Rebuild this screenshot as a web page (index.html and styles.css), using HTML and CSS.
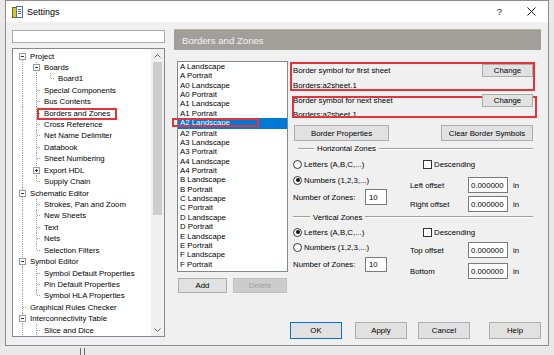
FILE: index.html
```html
<!DOCTYPE html>
<html lang="en">
<head>
    <meta charset="UTF-8">
    <title>Settings</title>
    <link rel="stylesheet" href="styles.css">
</head>
<body>
    <div class="window">
        <div class="titlebar">
            <svg class="app-icon" width="11" height="12" viewBox="0 0 11 12">
                <rect x="0.5" y="1.5" width="4" height="10" fill="#dcc52a" stroke="#6d6a22"/>
                <rect x="4.5" y="0.5" width="6" height="11" fill="#fff" stroke="#4a6fb5"/>
                <path d="M6 3.5h3M6 5.5h3M6 7.5h3" stroke="#4a6fb5"/>
            </svg>
            <span class="title">Settings</span>
            <span class="help">?</span>
            <svg class="close" width="9" height="9" viewBox="0 0 9 9">
                <path d="M0.5 0.5l8 8M8.5 0.5l-8 8" stroke="#222" stroke-width="1"/>
            </svg>
        </div>

        <div class="body">
            <div class="nav">
                <div class="search"></div>
                <div class="tree">
                    <div class="tree-body">
                        <div class="row"><i class="c minus first"></i><span>Project</span></div>
                        <div class="row"><i class="c ln"></i><i class="c minus"></i><span>Boards</span></div>
                        <div class="row"><i class="c ln"></i><i class="c ln"></i><i class="c end"></i><span>Board1</span></div>
                        <div class="row"><i class="c ln"></i><i class="c tee"></i><span>Special Components</span></div>
                        <div class="row"><i class="c ln"></i><i class="c tee"></i><span>Bus Contents</span></div>
                        <div class="row"><i class="c ln"></i><i class="c tee"></i><span>Borders and Zones</span></div>
                        <div class="row"><i class="c ln"></i><i class="c tee"></i><span>Cross Reference</span></div>
                        <div class="row"><i class="c ln"></i><i class="c tee"></i><span>Net Name Delimiter</span></div>
                        <div class="row"><i class="c ln"></i><i class="c tee"></i><span>Databook</span></div>
                        <div class="row"><i class="c ln"></i><i class="c tee"></i><span>Sheet Numbering</span></div>
                        <div class="row"><i class="c ln"></i><i class="c plus"></i><span>Export HDL</span></div>
                        <div class="row"><i class="c ln"></i><i class="c end"></i><span>Supply Chain</span></div>
                        <div class="row"><i class="c minus"></i><span>Schematic Editor</span></div>
                        <div class="row"><i class="c ln"></i><i class="c tee"></i><span>Strokes, Pan and Zoom</span></div>
                        <div class="row"><i class="c ln"></i><i class="c tee"></i><span>New Sheets</span></div>
                        <div class="row"><i class="c ln"></i><i class="c tee"></i><span>Text</span></div>
                        <div class="row"><i class="c ln"></i><i class="c tee"></i><span>Nets</span></div>
                        <div class="row"><i class="c ln"></i><i class="c end"></i><span>Selection Filters</span></div>
                        <div class="row"><i class="c minus"></i><span>Symbol Editor</span></div>
                        <div class="row"><i class="c ln"></i><i class="c tee"></i><span>Symbol Default Properties</span></div>
                        <div class="row"><i class="c ln"></i><i class="c tee"></i><span>Pin Default Properties</span></div>
                        <div class="row"><i class="c ln"></i><i class="c end"></i><span>Symbol HLA Properties</span></div>
                        <div class="row"><i class="c tee"></i><span>Graphical Rules Checker</span></div>
                        <div class="row"><i class="c minus"></i><span>Interconnectivity Table</span></div>
                        <div class="row"><i class="c ln"></i><i class="c tee"></i><span>Slice and Dice</span></div>
                        <div class="mark tree-mark"></div>
                    </div>
                    <div class="vscroll">
                        <div class="arrow">
                            <svg width="7" height="4" viewBox="0 0 7 4"><path d="M0.5 3.5l3-3 3 3" fill="none" stroke="#606060"/></svg>
                        </div>
                        <div class="track"><div class="thumb"></div></div>
                        <div class="arrow">
                            <svg width="7" height="4" viewBox="0 0 7 4"><path d="M0.5 0.5l3 3 3-3" fill="none" stroke="#606060"/></svg>
                        </div>
                    </div>
                </div>
            </div>

            <div class="main">
                <div class="page-header">Borders and Zones</div>
                <div class="page">
                    <div class="sizes">
                        <div class="size-list">
                            <div>A Landscape</div>
                            <div>A Portrait</div>
                            <div>A0 Landscape</div>
                            <div>A0 Portrait</div>
                            <div>A1 Landscape</div>
                            <div>A1 Portrait</div>
                            <div class="sel">A2 Landscape</div>
                            <div>A2 Portrait</div>
                            <div>A3 Landscape</div>
                            <div>A3 Portrait</div>
                            <div>A4 Landscape</div>
                            <div>A4 Portrait</div>
                            <div>B Landscape</div>
                            <div>B Portrait</div>
                            <div>C Landscape</div>
                            <div>C Portrait</div>
                            <div>D Landscape</div>
                            <div>D Portrait</div>
                            <div>E Landscape</div>
                            <div>E Portrait</div>
                            <div>F Landscape</div>
                            <div>F Portrait</div>
                            <div class="mark list-mark"></div>
                        </div>
                        <div class="list-buttons">
                            <button class="btn add">Add</button>
                            <button class="btn delete" disabled>Delete</button>
                        </div>
                    </div>

                    <div class="props">
                        <div class="sym-row">
                            <span>Border symbol for first sheet</span>
                            <button class="btn change">Change</button>
                        </div>
                        <div class="sym-val first-val">Borders:a2sheet.1</div>
                        <div class="sym-row">
                            <span>Border symbol for next sheet</span>
                            <button class="btn change">Change</button>
                        </div>
                        <div class="sym-val next-val">Borders:a2sheet.1</div>

                        <div class="prop-buttons">
                            <button class="btn border-props">Border Properties</button>
                            <button class="btn clear-symbols">Clear Border Symbols</button>
                        </div>

                        <div class="zone-title h-title">
                            <span class="rule lead"></span><span>Horizontal Zones</span><span class="rule"></span>
                        </div>
                        <div class="zones">
                            <div class="zone-left">
                                <div class="radio"><span class="dot"></span>Letters (A,B,C,...)</div>
                                <div class="radio"><span class="dot on"></span>Numbers (1,2,3,...)</div>
                                <div class="count h-count"><span class="count-label">Number of Zones:</span><input class="edit small" value="10"></div>
                            </div>
                            <div class="zone-right">
                                <div class="check"><span class="box"></span>Descending</div>
                                <div class="field left-off"><span class="field-label">Left offset</span><input class="edit" value="0.000000"><span class="unit">in</span></div>
                                <div class="field right-off"><span class="field-label">Right offset</span><input class="edit" value="0.000000"><span class="unit">in</span></div>
                            </div>
                        </div>

                        <div class="zone-title v-title">
                            <span class="rule lead"></span><span>Vertical Zones</span><span class="rule"></span>
                        </div>
                        <div class="zones v-zones">
                            <div class="zone-left">
                                <div class="radio"><span class="dot on"></span>Letters (A,B,C,...)</div>
                                <div class="radio short"><span class="dot"></span>Numbers (1,2,3,...)</div>
                                <div class="count v-count"><span class="count-label">Number of Zones:</span><input class="edit small" value="10"></div>
                            </div>
                            <div class="zone-right">
                                <div class="check"><span class="box"></span>Descending</div>
                                <div class="field top-off"><span class="field-label">Top offset</span><input class="edit" value="0.000000"><span class="unit">in</span></div>
                                <div class="field bottom-off"><span class="field-label">Bottom</span><input class="edit" value="0.000000"><span class="unit">in</span></div>
                            </div>
                        </div>

                        <div class="mark sym-mark-1"></div>
                        <div class="mark sym-mark-2"></div>
                    </div>
                </div>

                <div class="footer">
                    <button class="btn dlg ok">OK</button>
                    <button class="btn dlg apply">Apply</button>
                    <button class="btn dlg cancel">Cancel</button>
                    <button class="btn dlg help-btn">Help</button>
                </div>
            </div>
        </div>
    </div>
    <div class="dock"></div>
</body>
</html>
```

FILE: styles.css
```css
body {
    margin: 0;
    width: 554px;
    height: 355px;
    overflow: hidden;
    background: #e9e9e9;
    font-family: "Liberation Sans", Arial, sans-serif;
    font-size: 7.8px;
    color: #000;
}
.window {
    margin-left: 5px;
    width: 542px;
    height: 344px;
    border: 1px solid #8c8c8c;
    background: #f0f0f0;
    display: flex;
    flex-direction: column;
}
.titlebar {
    height: 21px;
    flex: none;
    background: #fff;
    display: flex;
    align-items: center;
    padding-left: 6px;
}
.title {
    margin-left: 4px;
    font-size: 9px;
}
.help {
    margin-left: auto;
    font-size: 9.5px;
    color: #222;
}
.close {
    margin: 0 12px 0 25px;
}
.body {
    display: flex;
    gap: 9px;
    padding: 8px 7px 0 6px;
}

/* navigation tree */
.nav {
    width: 153px;
    display: flex;
    flex-direction: column;
}
.search {
    height: 13px;
    box-sizing: border-box;
    border: 1px solid #a9a9a9;
    background: #fff;
    margin-bottom: 5px;
}
.tree {
    height: 289px;
    box-sizing: border-box;
    border: 1px solid #828790;
    background: #fff;
    display: flex;
}
.tree-body {
    flex: 1;
    padding-top: 1.3px;
    position: relative;
    overflow: hidden;
}
.row {
    height: 11.43px;
    display: flex;
    align-items: center;
    white-space: nowrap;
}
.row span {
    margin-left: 3px;
}
.c {
    --v: repeating-linear-gradient(#a0a0a0 0 1px, transparent 1px 2px);
    --h: repeating-linear-gradient(90deg, #a0a0a0 0 1px, transparent 1px 2px);
    flex: none;
    width: 14px;
    height: 100%;
    position: relative;
}
.ln {
    background: var(--v) 9px 0 / 1px 100% no-repeat;
}
.tee, .minus, .plus {
    background: var(--h) 10px 50% / 6px 1px no-repeat, var(--v) 9px 0 / 1px 100% no-repeat;
}
.end {
    background: var(--h) 10px 50% / 6px 1px no-repeat, var(--v) 9px 0 / 1px 50% no-repeat;
}
.minus.first {
    background: var(--h) 10px 50% / 6px 1px no-repeat, var(--v) 9px 100% / 1px 50% no-repeat;
}
.minus::before, .plus::before {
    content: "";
    position: absolute;
    left: 6px;
    top: 50%;
    margin-top: -3.5px;
    width: 7px;
    height: 7px;
    box-sizing: border-box;
    border: 1px solid #9a9a9a;
    background: #fff;
}
.minus::after, .plus::after {
    content: "";
    position: absolute;
    left: 8px;
    top: 50%;
    margin-top: -1.5px;
    width: 3px;
    height: 3px;
    background: linear-gradient(#333, #333) center / 3px 1px no-repeat;
}
.plus::after {
    background: linear-gradient(#333, #333) center / 3px 1px no-repeat, linear-gradient(#333, #333) center / 1px 3px no-repeat;
}
.vscroll {
    width: 13px;
    flex: none;
    background: #f0f0f0;
    display: flex;
    flex-direction: column;
}
.arrow {
    height: 13px;
    display: flex;
    align-items: center;
    justify-content: center;
}
.track {
    flex: 1;
}
.thumb {
    height: 153px;
    margin: 0 2px;
    background: #cdcdcd;
}

/* annotation boxes */
.mark {
    position: absolute;
    box-sizing: border-box;
    border: 2px solid #e3343a;
    pointer-events: none;
}
.tree-mark { left: 24px; top: 59px; width: 80px; height: 12px; }
.list-mark { left: -6px; top: 56px; width: 87px; height: 12px; }
.sym-mark-1 { left: 0; top: -2px; width: 245px; height: 29px; }
.sym-mark-2 { left: 2px; top: 32px; width: 245px; height: 22px; }

/* page */
.main {
    width: 367px;
    display: flex;
    flex-direction: column;
}
.page-header {
    height: 21px;
    margin-top: -1px;
    box-sizing: border-box;
    border-top: 1px solid #b8b5b1;
    background: #a29f9b;
    color: #f2f2f2;
    font-size: 9.6px;
    display: flex;
    align-items: center;
    padding-left: 8px;
}
.page {
    display: flex;
    height: 243px;
    box-sizing: border-box;
    padding-top: 11px;
}
.sizes {
    margin-left: 3px;
    width: 111px;
    display: flex;
    flex-direction: column;
}
.size-list {
    height: 211px;
    box-sizing: border-box;
    border: 1px solid #828790;
    background: #fff;
    position: relative;
}
.size-list div {
    height: 9.36px;
    line-height: 9.36px;
    padding-left: 2px;
    white-space: nowrap;
}
.size-list .sel {
    background: #0078d7;
    color: #fff;
    height: 10.4px;
}
.list-buttons {
    display: flex;
    gap: 6px;
    margin-top: 6px;
}
.btn {
    font: inherit;
    color: #000;
    padding: 0;
    background: #e1e1e1;
    border: 1px solid #adadad;
    height: 15px;
}
.add { margin-left: 1px; width: 49px; }
.delete {
    width: 54px;
    background: #cccccc;
    border-color: #bfbfbf;
    color: #a0a0a0;
}

.props {
    margin: 3px 0 0 2px;
    width: 246px;
    padding: 0 3px;
    box-sizing: border-box;
    position: relative;
}
.sym-row {
    height: 13px;
    display: flex;
    align-items: center;
    justify-content: space-between;
}
.change {
    width: 51px;
    height: 13px;
    position: relative;
    z-index: 1;
}
.sym-val {
    display: flex;
    align-items: center;
}
.first-val { height: 17px; }
.next-val { height: 15px; }
.prop-buttons {
    margin-top: 3px;
    display: flex;
    justify-content: space-between;
}
.prop-buttons .btn { height: 16px; }
.border-props { margin-left: 1px; width: 95px; }
.clear-symbols { width: 92px; }

.zone-title {
    display: flex;
    align-items: center;
    gap: 3px;
}
.h-title { height: 15px; }
.v-title { height: 10px; }
.rule {
    flex: 1;
    height: 1px;
    background: #a0a0a0;
    border-bottom: 1px solid #fff;
}
.rule.lead { flex: none; width: 16px; }
.h-title .rule.lead { margin-left: 5px; }
.v-title .rule.lead { width: 17px; }

.zones {
    display: flex;
}
.zone-left {
    width: 117px;
}
.radio, .check {
    height: 16px;
    display: flex;
    align-items: center;
    white-space: nowrap;
}
.v-zones .zone-left, .v-zones .zone-right { padding-top: 2px; }
.radio.short { height: 14px; }
.dot {
    width: 9px;
    height: 9px;
    box-sizing: border-box;
    border: 1px solid #333;
    border-radius: 50%;
    background: #fff;
    margin-right: 2px;
    display: flex;
    align-items: center;
    justify-content: center;
}
.dot.on::after {
    content: "";
    width: 4px;
    height: 4px;
    border-radius: 50%;
    background: #111;
}
.check { padding-left: 13px; }
.box {
    width: 9px;
    height: 9px;
    box-sizing: border-box;
    border: 1px solid #333;
    background: #fff;
    margin-right: 2px;
}
.count, .field {
    display: flex;
    align-items: center;
}
.count-label { width: 72px; }
.field-label { width: 58px; }
.edit {
    font: inherit;
    color: #000;
    width: 40px;
    height: 16px;
    box-sizing: border-box;
    border: 1px solid #7a7a7a;
    background: #fff;
    padding: 0 0 0 2px;
    margin: 0;
}
.edit.small { width: 22px; padding-left: 3px; }
.unit { margin-left: 5px; }
.h-count { margin-top: 1px; }
.left-off { margin-top: 5px; }
.right-off { margin-top: 3px; }
.v-count { margin-top: 3px; }
.v-count .edit { height: 15px; }
.top-off { margin-top: 2px; }
.bottom-off { margin-top: 5px; }

.footer {
    display: flex;
    margin-top: 29px;
    padding-left: 116px;
}
.dlg {
    width: 52px;
    height: 17px;
}
.ok { border-color: #0078d7; }
.apply { margin-left: 13px; }
.cancel { margin-left: 11px; }
.help-btn { margin-left: 19px; }

.dock {
    margin: 2px 0 0 80px;
    width: 3px;
    height: 7px;
    border-left: 1px solid #6a6a6a;
    border-right: 1px solid #6a6a6a;
}
```
